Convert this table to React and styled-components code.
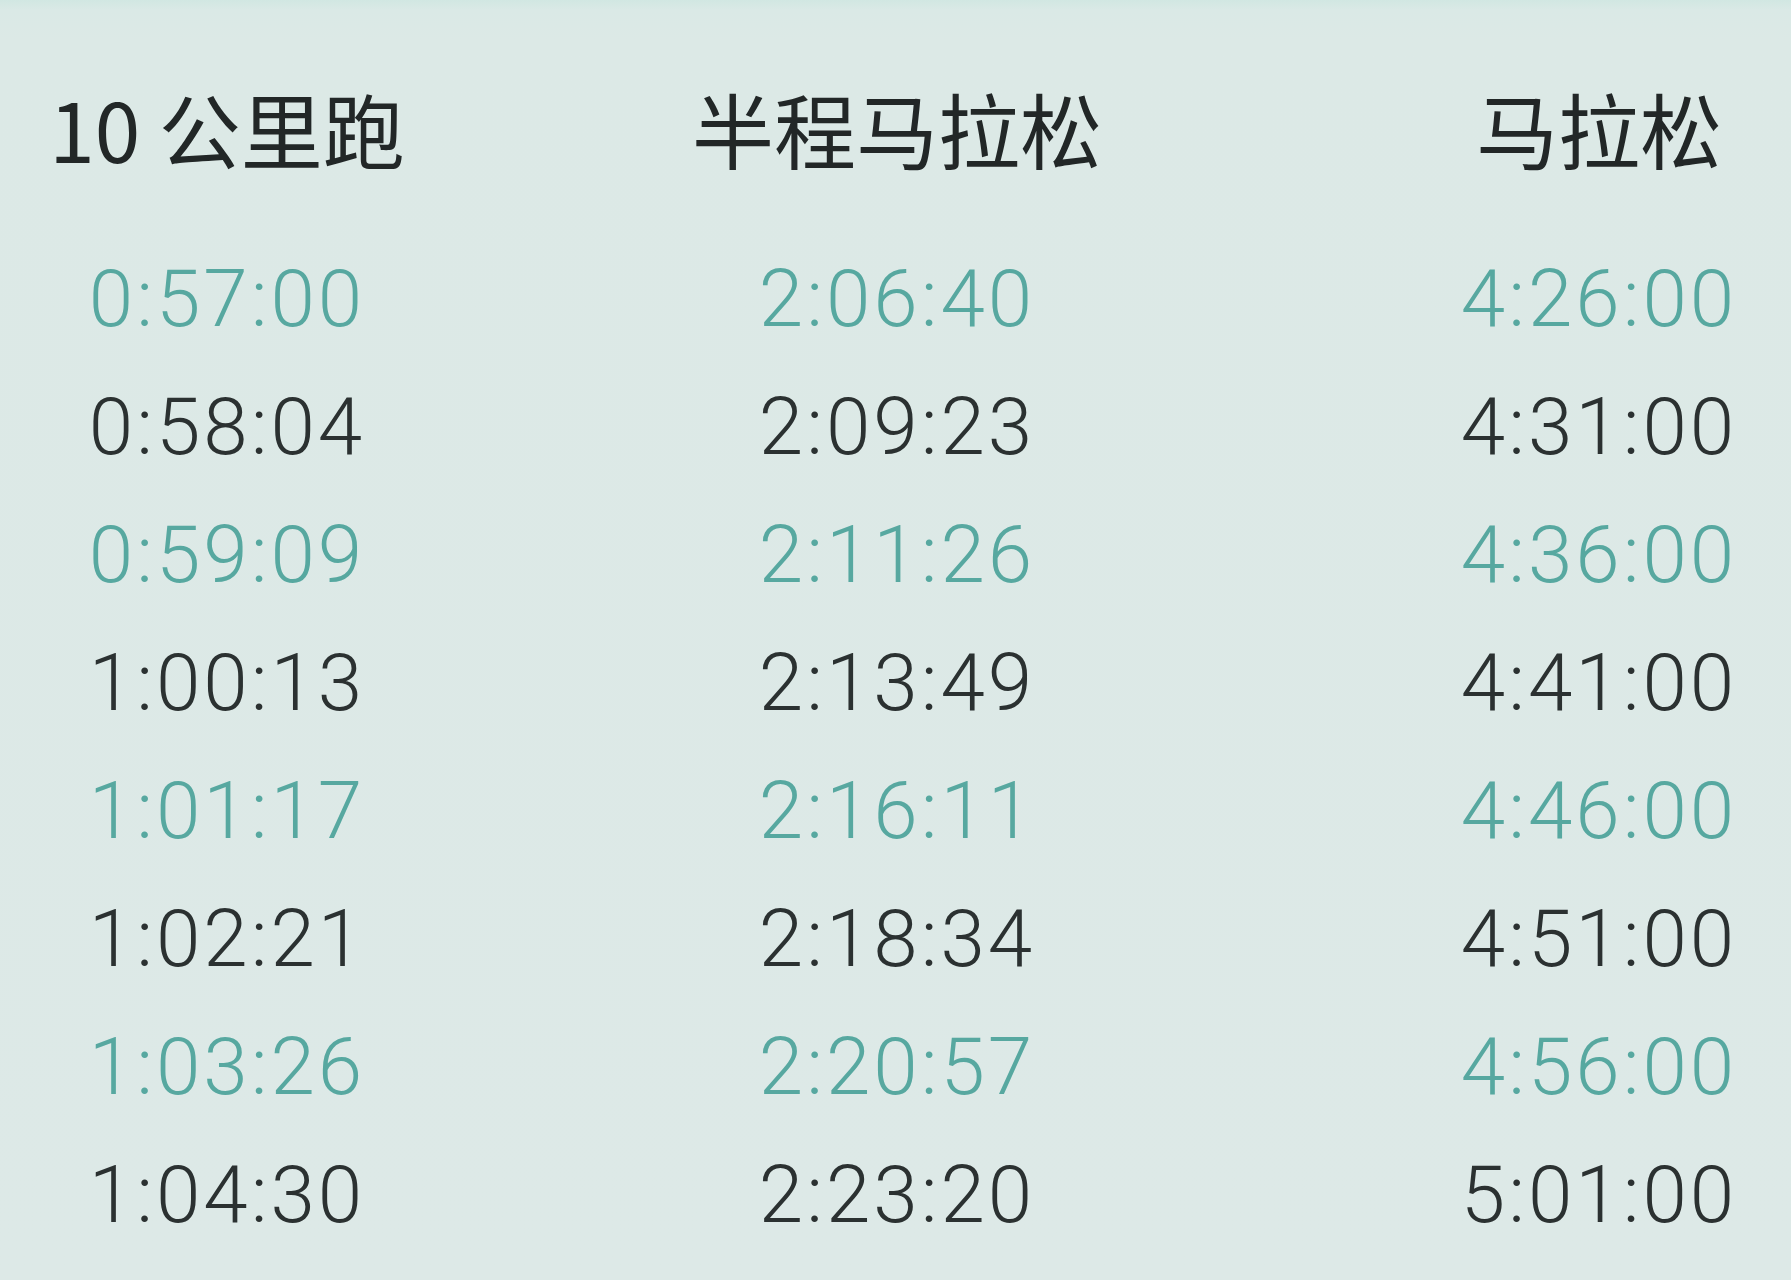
import React from 'react'
import styled, { createGlobalStyle } from 'styled-components'

const headers = ['10 公里跑', '半程马拉松', '马拉松']

const rows = [
  ['0:57:00', '2:06:40', '4:26:00'],
  ['0:58:04', '2:09:23', '4:31:00'],
  ['0:59:09', '2:11:26', '4:36:00'],
  ['1:00:13', '2:13:49', '4:41:00'],
  ['1:01:17', '2:16:11', '4:46:00'],
  ['1:02:21', '2:18:34', '4:51:00'],
  ['1:03:26', '2:20:57', '4:56:00'],
  ['1:04:30', '2:23:20', '5:01:00']
]

export default function App() {
  return (
    <>
      <GlobalStyle />
      <Page>
        <Table>
          {headers.map((h, i) => (
            <Header key={h} $mid={i === 1}>{h}</Header>
          ))}
          {rows.map((row, r) =>
            row.map((t, c) => (
              <Time key={`${r}-${c}`} $mid={c === 1} $accent={r % 2 === 0}>
                {t}
              </Time>
            ))
          )}
        </Table>
      </Page>
    </>
  )
}

// STYLES
const GlobalStyle = createGlobalStyle`
  html, body { margin: 0; padding: 0; }
  body { background: #dce9e6; overflow: hidden; }
`

const Page = styled.div`
  width: 1791px;
  height: 1280px;
  box-sizing: border-box;
  padding: 64px 12px 0 47px;
  background: linear-gradient(180deg, #d1e7e2 0px, #dae9e6 10px, #dce9e6 40px, #dde9e7 100%);
`

const Table = styled.div`
  display: grid;
  grid-template-columns: 360px 360px 360px;
  justify-content: space-between;
  grid-auto-rows: 128px;
  grid-template-rows: 171px;
`

const Header = styled.div`
  display: flex;
  justify-content: center;
  font-family: "Noto Sans CJK SC", "Noto Sans", sans-serif;
  font-size: 82px;
  line-height: 128px;
  font-weight: 400;
  color: #222727;
  white-space: nowrap;
  padding-right: ${p => (p.$mid ? '32px' : '0')};
`

const Time = styled.div`
  display: flex;
  justify-content: center;
  font-family: Roboto, "Liberation Sans", sans-serif;
  font-weight: 300;
  font-size: 80px;
  letter-spacing: 3px;
  line-height: 128px;
  white-space: nowrap;
  color: ${p => (p.$accent ? '#57a8a0' : '#2b3131')};
  padding-right: ${p => (p.$mid ? '32px' : '0')};
`
